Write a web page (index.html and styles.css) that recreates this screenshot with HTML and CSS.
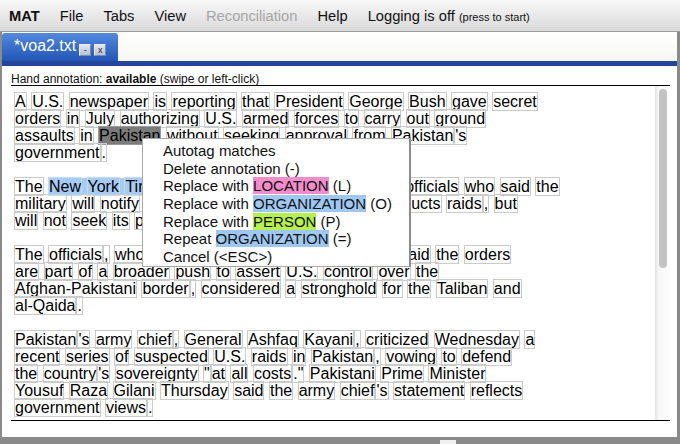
FILE: index.html
```html
<!DOCTYPE html>
<html>
<head>
<meta charset="utf-8">
<title>MAT</title>
<link rel="stylesheet" href="styles.css">
</head>
<body>
<div class="app">
  <div class="menubar">
    <span class="mi brand">MAT</span>
    <span class="mi">File</span>
    <span class="mi">Tabs</span>
    <span class="mi">View</span>
    <span class="mi disabled">Reconciliation</span>
    <span class="mi">Help</span>
    <span class="mi">Logging is off <small>(press to start)</small></span>
  </div>
  <div class="window">
    <div class="tabbar">
      <div class="tab">
        <span class="tabtitle">*voa2.txt</span>
        <span class="tbtn">-</span>
        <span class="tbtn">x</span>
      </div>
    </div>
    <div class="strip"></div>
    <div class="pane">
      <div class="status">Hand annotation: <b>available</b> (swipe or left-click)</div>
      <div class="doc">
        <div class="text">
          <p><span class="t">A</span> <span class="t">U.S.</span> <span class="t">newspaper</span> <span class="t">is</span> <span class="t">reporting</span> <span class="t">that</span> <span class="t">President</span> <span class="t">George</span> <span class="t">Bush</span> <span class="t">gave</span> <span class="t">secret</span><br><span class="t">orders</span> <span class="t">in</span> <span class="t">July</span> <span class="t">authorizing</span> <span class="t">U.S.</span> <span class="t">armed</span> <span class="t">forces</span> <span class="t">to</span> <span class="t">carry</span> <span class="t">out</span> <span class="t">ground</span><br><span class="t">assaults</span> <span class="t">in</span> <span class="t sel">Pakistan</span> <span class="t">without</span> <span class="t">seeking</span> <span class="t">approval</span> <span class="t">from</span> <span class="t">Pakistan</span><span class="t">'s</span><br><span class="t">government</span><span class="t">.</span></p>
          <p><span class="t">The</span> <span class="org"><span class="t">New</span> <span class="t">York</span> <span class="t">Times</span></span> <span class="t">quotes</span> <span class="t">unnamed</span> <span class="t">top</span> <span class="t">American</span> <span class="t">officials</span> <span class="t">who</span> <span class="t">said</span> <span class="t">the</span><br><span class="t">military</span> <span class="t">will</span> <span class="t">notify</span> <span class="t">Pakistan</span><span class="t">'s</span> <span class="t">government</span> <span class="t">when</span> <span class="t">it</span> <span class="t">conducts</span> <span class="t">raids</span><span class="t">,</span> <span class="t">but</span><br><span class="t">will</span> <span class="t">not</span> <span class="t">seek</span> <span class="t">its</span> <span class="t">permission</span><span class="t">.</span></p>
          <p><span class="t">The</span> <span class="t">officials</span><span class="t">,</span> <span class="t">who</span> <span class="t">spoke</span> <span class="t">on</span> <span class="t">condition</span> <span class="t">of</span> <span class="t">anonymity</span><span class="t">,</span> <span class="t">said</span> <span class="t">the</span> <span class="t">orders</span><br><span class="t">are</span> <span class="t">part</span> <span class="t">of</span> <span class="t">a</span> <span class="t">broader</span> <span class="t">push</span> <span class="t">to</span> <span class="t">assert</span> <span class="t">U.S.</span> <span class="t">control</span> <span class="t">over</span> <span class="t">the</span><br><span class="t">Afghan-Pakistani</span> <span class="t">border</span><span class="t">,</span> <span class="t">considered</span> <span class="t">a</span> <span class="t">stronghold</span> <span class="t">for</span> <span class="t">the</span> <span class="t">Taliban</span> <span class="t">and</span><br><span class="t">al-Qaida</span><span class="t">.</span></p>
          <p><span class="t">Pakistan</span><span class="t">'s</span> <span class="t">army</span> <span class="t">chief</span><span class="t">,</span> <span class="t">General</span> <span class="t">Ashfaq</span> <span class="t">Kayani</span><span class="t">,</span> <span class="t">criticized</span> <span class="t">Wednesday</span> <span class="t">a</span><br><span class="t">recent</span> <span class="t">series</span> <span class="t">of</span> <span class="t">suspected</span> <span class="t">U.S.</span> <span class="t">raids</span> <span class="t">in</span> <span class="t">Pakistan</span><span class="t">,</span> <span class="t">vowing</span> <span class="t">to</span> <span class="t">defend</span><br><span class="t">the</span> <span class="t">country</span><span class="t">'s</span> <span class="t">sovereignty</span> <span class="t">"</span><span class="t">at</span> <span class="t">all</span> <span class="t">costs</span><span class="t">."</span> <span class="t">Pakistani</span> <span class="t">Prime</span> <span class="t">Minister</span><br><span class="t">Yousuf</span> <span class="t">Raza</span> <span class="t">Gilani</span> <span class="t">Thursday</span> <span class="t">said</span> <span class="t">the</span> <span class="t">army</span> <span class="t">chief</span><span class="t">'s</span> <span class="t">statement</span> <span class="t">reflects</span><br><span class="t">government</span> <span class="t">views</span><span class="t">.</span></p>
        </div>
        <div class="scroll"><div class="thumb"></div></div>
      </div>
    </div>
  </div>
  <div class="bottombar"><span class="grip"></span></div>
  <div class="menu">
    <div class="item">Autotag matches</div>
    <div class="item">Delete annotation (-)</div>
    <div class="item">Replace with <span class="loc">LOCATION</span> (L)</div>
    <div class="item">Replace with <span class="orgl">ORGANIZATION</span> (O)</div>
    <div class="item">Replace with <span class="per">PERSON</span> (P)</div>
    <div class="item">Repeat <span class="orgl">ORGANIZATION</span> (=)</div>
    <div class="item">Cancel (&lt;ESC&gt;)</div>
  </div>
</div>
</body>
</html>
```
FILE: styles.css
```css
* { box-sizing: border-box; }
html, body { margin: 0; padding: 0; }
body {
  width: 680px;
  height: 444px;
  overflow: hidden;
  font-family: "Liberation Sans", Arial, sans-serif;
  background: #8a8a8a;
  color: #000;
}
.app {
  position: relative;
  width: 680px;
  height: 444px;
  display: flex;
  flex-direction: column;
}
.menubar {
  height: 32px;
  flex: none;
  border-bottom: 1px solid #9c9c9c;
  background: linear-gradient(#f8f8f8, #d9d9d9);
  display: flex;
  align-items: center;
  gap: 20px;
  padding-left: 9px;
  font-size: 14.7px;
  color: #111;
}
.mi.brand { font-weight: bold; }
.mi.disabled { color: #a6a6a6; }
.mi small { font-size: 11px; }
.window {
  flex: 1;
  display: flex;
  flex-direction: column;
  background: #fff;
  border-left: 2px solid #8a8a8a;
  border-right: 3px solid #8a8a8a;
}
.tabbar {
  height: 29px;
  flex: none;
  background: linear-gradient(#ffffff, #f6f6f0);
  display: flex;
  align-items: flex-end;
}
.tab {
  width: 116px;
  height: 28px;
  border-radius: 3px 3px 0 0;
  background: linear-gradient(#5289dd, #2456b6);
  display: flex;
  align-items: center;
  padding-left: 12px;
  color: #fff;
}
.tabtitle { font-size: 16px; margin-top: -3px; }
.tbtn {
  width: 12px;
  height: 12px;
  margin-left: 3px;
  margin-top: 6px;
  background: linear-gradient(#dfe5ef, #b9c3d6);
  border: 1px solid #e8ecf4;
  border-right-color: #7d8aa8;
  border-bottom-color: #7d8aa8;
  color: #222;
  font-size: 9px;
  line-height: 10px;
  text-align: center;
}
.strip {
  height: 5px;
  flex: none;
  background: #25449c;
}
.pane {
  flex: 1;
  padding: 7px 7px 0 9px;
  background: #fff;
}
.status {
  font-size: 12px;
  line-height: 12px;
  height: 13px;
  border-bottom: 1px solid #000;
  color: #111;
}
.doc {
  height: 335px;
  border-bottom: 1px solid #000;
  display: flex;
}
.text {
  flex: 1;
  padding: 7px 0 0 3px;
  font-size: 16px;
  line-height: 17px;
  white-space: nowrap;
  color: #000;
}
.text p { margin: 0 0 17px 0; }
.t { border: 1px solid #cbcbcb; }
.t.sel { background: #7b7b7b; border-color: #9a9a9a; }
.org { background: #a6ccf4; }
.org .t { border-color: #c4dcf6; }
.scroll {
  width: 15px;
  flex: none;
  background: linear-gradient(90deg, #e4e4e4, #f7f7f7 4px, #fdfdfd);
  padding: 3px 3px 0 4px;
}
.thumb {
  width: 8px;
  height: 179px;
  border-radius: 4px;
  background: #c3c3c3;
}
.bottombar {
  height: 7px;
  flex: none;
  background: #8a8a8a;
  position: relative;
}
.grip {
  position: absolute;
  left: 440px;
  top: 3px;
  width: 16px;
  height: 4px;
  background: #f0f0f0;
}
.menu {
  position: absolute;
  left: 142px;
  top: 138px;
  width: 269px;
  height: 129px;
  background: #fff;
  border: 1px solid #a8a8a8;
  border-right: 2px solid #8c8c8c;
  padding: 3px 0 0 20px;
  font-size: 15px;
  line-height: 17.67px;
  color: #111;
}
.loc { background: #f28ccb; }
.orgl { background: #9ec8f2; }
.per { background: #b6f04e; }
```
